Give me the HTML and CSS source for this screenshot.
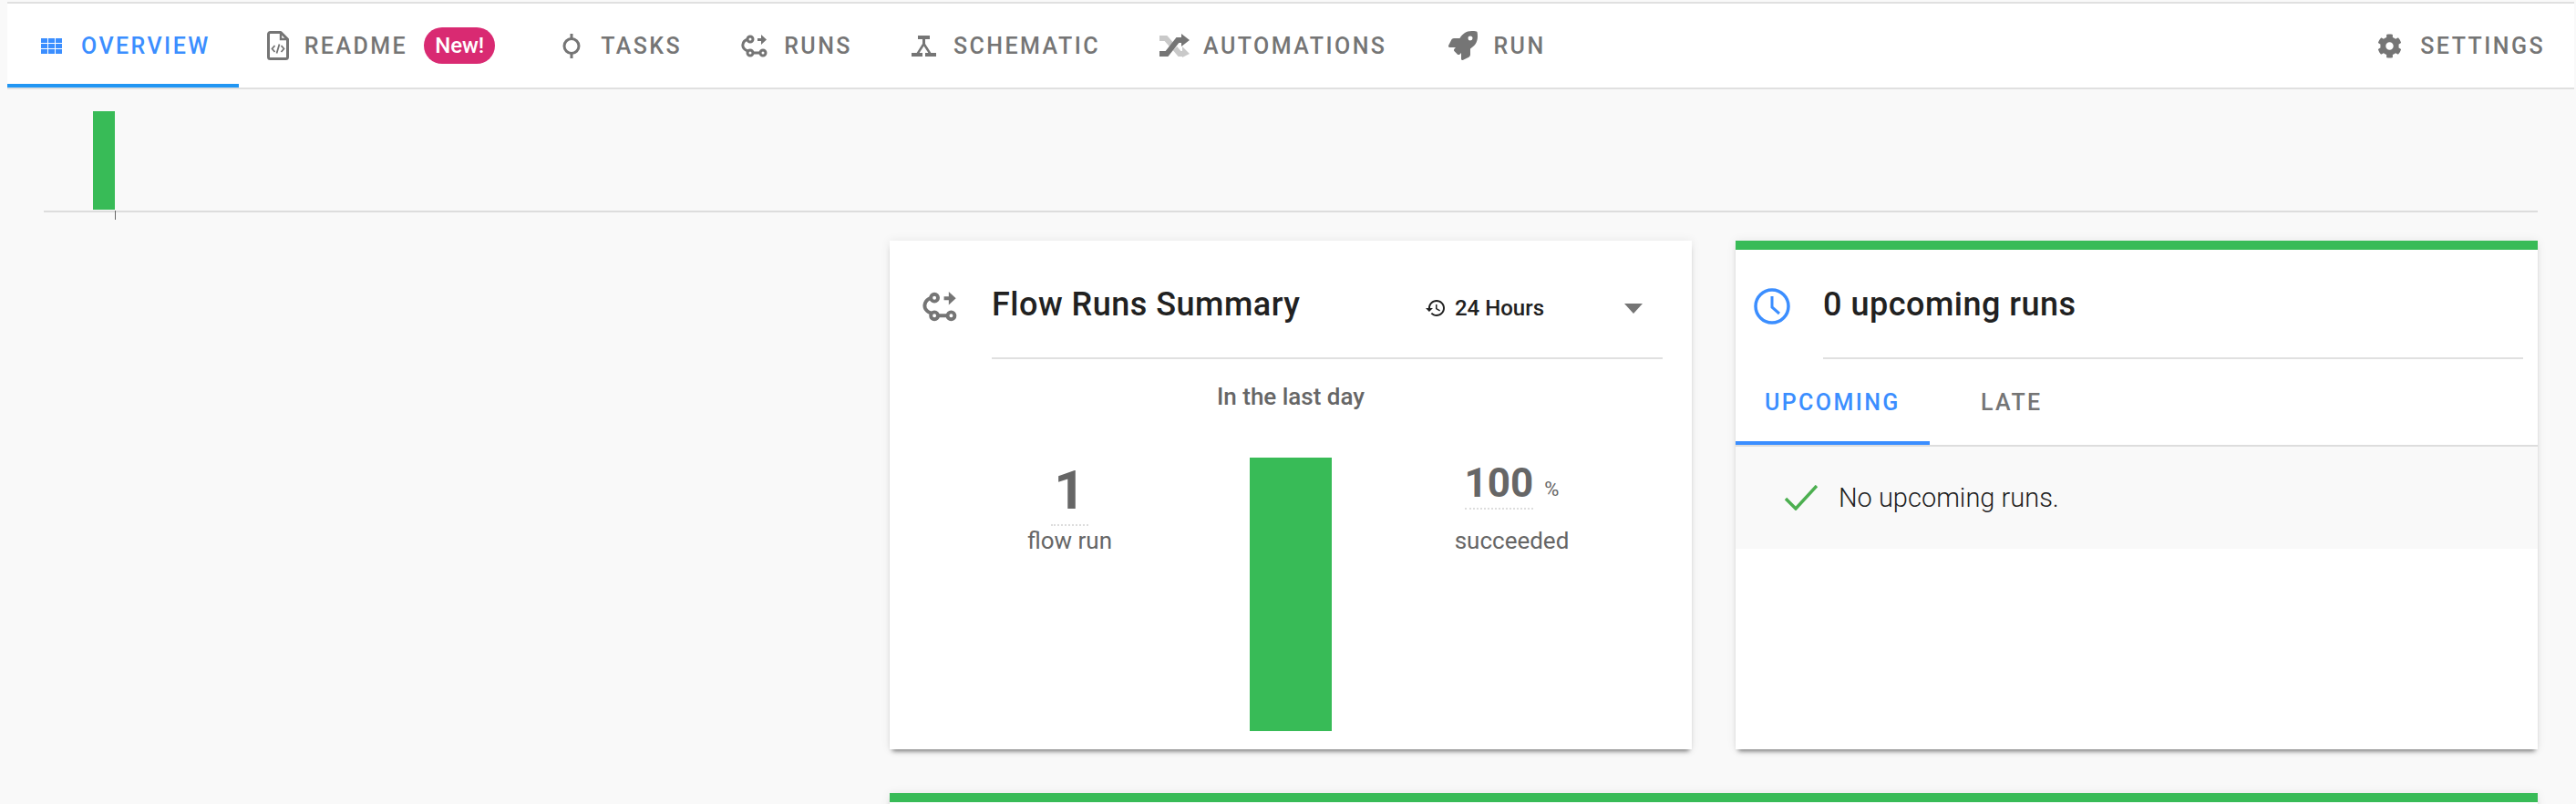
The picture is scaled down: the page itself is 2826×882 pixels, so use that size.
FILE: index.html
```html
<!DOCTYPE html>
<html lang="en">
<head>
    <meta charset="UTF-8">
    <title>Flow Overview</title>
    <link rel="stylesheet" href="styles.css">
</head>
<body>

<!-- Top tabs -->
<nav class="nav">
    <a class="tab active">
        <svg class="ic-overview" viewBox="0 0 23 17" fill="currentColor">
            <rect x="0" y="0" width="7" height="5"/><rect x="8" y="0" width="7" height="5"/><rect x="16" y="0" width="7" height="5"/>
            <rect x="0" y="6" width="7" height="5"/><rect x="8" y="6" width="7" height="5"/><rect x="16" y="6" width="7" height="5"/>
            <rect x="0" y="12" width="7" height="5"/><rect x="8" y="12" width="7" height="5"/><rect x="16" y="12" width="7" height="5"/>
        </svg>
        OVERVIEW
    </a>
    <a class="tab tab-readme">
        <svg class="ic-readme" viewBox="0 0 24 32" fill="none" stroke="currentColor">
            <path d="M15 1.5H3.5a2 2 0 0 0-2 2v25a2 2 0 0 0 2 2h17a2 2 0 0 0 2-2V9z" stroke-width="3" stroke-linejoin="round"/>
            <path d="M15 2v7h7" stroke-width="2.4"/>
            <path d="M8.5 16l-3 3.5 3 3.5M15.500 16l3 3.500-3 3.500M13.500 14.500l-3 10" stroke-width="1.800"/>
        </svg>
        README
        <span class="badge">New!</span>
    </a>
    <a class="tab">
        <svg class="ic-tasks" viewBox="0 0 38 27" fill="none" stroke="currentColor" stroke-width="3">
            <circle cx="19" cy="13.500" r="8"/>
            <path d="M19 0v5.500M19 21.500V27"/>
        </svg>
        TASKS
    </a>
    <a class="tab">
        <svg class="ic-runs" viewBox="0 0 29 25">
            <use href="#runs-glyph"/>
        </svg>
        RUNS
    </a>
    <a class="tab">
        <svg class="ic-schematic" viewBox="0 0 27 23" fill="currentColor">
            <rect x="7" y="0" width="13" height="4"/>
            <rect x="12" y="3" width="3" height="7"/>
            <path d="M12 9h3l7 11h-3l-5.500-8.500L8 20H5z"/>
            <rect x="0" y="19" width="12" height="4"/>
            <rect x="15" y="19" width="12" height="4"/>
        </svg>
        SCHEMATIC
    </a>
    <a class="tab">
        <svg class="ic-auto" viewBox="0 0 33 26" fill="none" stroke-width="6">
            <path d="M0 5h7l7 8M17 16l5 6h5" stroke="#c9c9c9"/>
            <path d="M25 14l8 8-8 4z" fill="#c9c9c9"/>
            <path d="M0 22h8L20 7h7" stroke="currentColor"/>
            <path d="M24 0l9 7-9 7z" fill="currentColor"/>
        </svg>
        AUTOMATIONS
    </a>
    <a class="tab">
        <svg class="ic-run" viewBox="0 0 512 512" fill="currentColor">
            <path d="M505.12 19.09c-1.19-5.53-6.66-11-12.21-12.19C460.72 0 435.51 0 410.41 0 307.18 0 245.27 55.2 199.05 128H94.84c-16.35.02-35.56 11.88-42.89 26.48L2.52 253.3A28.4 28.4 0 0 0 0 264a24 24 0 0 0 24 24h103.81l-22.47 22.47c-11.37 11.36-13 32.26 0 45.25l50.9 50.9c11.16 11.19 32.16 13.16 45.28 0l22.47-22.47V488a24 24 0 0 0 24 24 28.56 28.56 0 0 0 10.71-2.52l98.73-49.39c14.63-7.3 26.51-26.5 26.51-42.86V312.8c72.6-46.31 128.03-108.41 128.03-211.1.03-25.2.03-50.4-6.92-82.61zM384.04 168a40 40 0 1 1 40.01-40 40.02 40.02 0 0 1-40.01 40z"/>
        </svg>
        RUN
    </a>
    <a class="tab tab-settings">
        <svg class="ic-settings" viewBox="0 0 512 512" fill="currentColor">
            <path d="M487.4 315.700l-42.600-24.600c4.300-23.200 4.300-47 0-70.200l42.600-24.600c4.900-2.800 7.100-8.600 5.500-14-11.100-35.600-30-67.800-54.700-94.600-3.800-4.100-10-5.100-14.800-2.300L380.800 110c-17.900-15.400-38.500-27.300-60.800-35.100V25.800c0-5.600-3.900-10.500-9.400-11.700-36.700-8.200-74.300-7.800-109.200 0-5.500 1.200-9.400 6.100-9.400 11.700V75c-22.200 7.900-42.800 19.800-60.800 35.100L88.700 85.500c-4.900-2.800-11-1.900-14.800 2.300-24.700 26.700-43.600 58.900-54.700 94.600-1.700 5.400.6 11.200 5.500 14L67.300 221c-4.300 23.200-4.300 47 0 70.200l-42.600 24.600c-4.900 2.800-7.100 8.600-5.500 14 11.100 35.600 30 67.800 54.700 94.600 3.800 4.100 10 5.100 14.800 2.300l42.600-24.600c17.900 15.400 38.500 27.300 60.800 35.100v49.200c0 5.600 3.900 10.500 9.400 11.700 36.700 8.200 74.300 7.800 109.200 0 5.500-1.200 9.400-6.100 9.400-11.700v-49.200c22.200-7.900 42.800-19.800 60.800-35.100l42.600 24.600c4.900 2.800 11 1.900 14.800-2.300 24.700-26.700 43.600-58.900 54.700-94.600 1.500-5.500-.7-11.300-5.600-14.100zM256 336c-44.100 0-80-35.900-80-80s35.900-80 80-80 80 35.900 80 80-35.900 80-80 80z"/>
        </svg>
        SETTINGS
    </a>
</nav>

<!-- Shared glyph for the flow run icon -->
<svg class="defs" aria-hidden="true">
    <symbol id="runs-glyph" viewBox="0 0 29 25">
        <g fill="none" stroke="currentColor" stroke-width="3">
            <circle cx="10" cy="5" r="3"/>
            <circle cx="10" cy="20" r="3"/>
            <circle cx="24" cy="20" r="3"/>
            <path d="M13 20h8M7.500 5C1 7-1 15 7.500 18"/>
        </g>
        <path d="M18 4h4V0l6 5.500-6 5.500V7h-4z" fill="currentColor"/>
    </symbol>
</svg>

<!-- Run history bars -->
<section class="history">
    <div class="history-bar"></div>
</section>

<main class="grid">

    <!-- Flow runs summary -->
    <section class="card">
        <header class="card-head">
            <svg class="head-icon ic-flow" viewBox="0 0 29 25"><use href="#runs-glyph"/></svg>
            <div class="head-main">
                <h2>Flow Runs Summary</h2>
                <div class="range">
                    <svg viewBox="0 0 24 24" fill="currentColor"><path d="M13 3c-4.970 0-9 4.030-9 9H1l3.890 3.890.07.14L9 12H6c0-3.870 3.130-7 7-7s7 3.130 7 7-3.130 7-7 7c-1.930 0-3.680-.79-4.940-2.060l-1.420 1.420C8.270 19.990 10.510 21 13 21c4.970 0 9-4.030 9-9s-4.030-9-9-9zm-1 5v5l4.280 2.540.72-1.210-3.500-2.080V8H12z"/></svg>
                    <span>24 Hours</span>
                    <i class="caret"></i>
                </div>
            </div>
        </header>
        <p class="period">In the last day</p>
        <div class="stats">
            <div class="stat">
                <div class="stat-top">
                    <span class="stat-val stat-count">1</span>
                </div>
                <span class="stat-label">flow run</span>
            </div>
            <div class="stat-bar"></div>
            <div class="stat">
                <div class="stat-top">
                    <span class="stat-val stat-pct">100</span>
                    <span class="pct-sign">%</span>
                </div>
                <span class="stat-label">succeeded</span>
            </div>
        </div>
    </section>

    <!-- Upcoming runs -->
    <section class="card card-green">
        <header class="card-head">
            <svg class="head-icon ic-clock" viewBox="0 0 40 40" fill="none" stroke="currentColor" stroke-width="3.500">
                <circle cx="20" cy="20" r="18"/>
                <path d="M20 9v12l8 7" stroke-width="3"/>
            </svg>
            <div class="head-main head-upcoming">
                <h2>0 upcoming runs</h2>
            </div>
        </header>
        <div class="subtabs">
            <a class="subtab active">UPCOMING</a>
            <a class="subtab">LATE</a>
        </div>
        <div class="empty">
            <svg viewBox="0 0 36 28" fill="none" stroke="#4caf50" stroke-width="3.500"><path d="M1 15l11 11L35 1"/></svg>
            <span>No upcoming runs.</span>
        </div>
    </section>

    <!-- Next card, cut off by the window -->
    <section class="card card-green card-wide"></section>

</main>
</body>
</html>
```

FILE: styles.css
```css
html, body {
    height: 882px;
    overflow: hidden;
}
body {
    margin: 0;
    padding-top: 2px;
    background-color: #f9f9f9;
    font-family: Roboto, 'Liberation Sans', sans-serif;
    color: #212121;
}
.defs {
    display: none;
}
h2 {
    margin: 0;
    font-size: 36px;
    font-weight: 500;
    line-height: 44px;
    letter-spacing: 0.5px;
    color: #212121;
}

/* nav */
.nav {
    display: flex;
    height: 92px;
    margin: 0 2px 0 8px;
    background-color: #fff;
    border-top: 2px solid #e0e0e0;
    border-bottom: 2px solid #e0e0e0;
}
.tab {
    display: flex;
    align-items: center;
    height: 92px;
    box-sizing: border-box;
    padding: 0 33px 0 32px;
    font-size: 25px;
    font-weight: 500;
    letter-spacing: 2.450px;
    color: #757575;
}
.tab.active {
    padding: 0 31px 0 37px;
    color: #3b8eff;
    box-shadow: inset 0 -4px 0 #2196f3;
}
.tab-readme {
    padding-left: 31px;
}
.tab-settings {
    margin-left: auto;
    padding-right: 32px;
}
.ic-overview { width: 23px; height: 17px; margin-right: 21px; }
.ic-readme { width: 24px; height: 32px; margin-right: 17px; }
.ic-tasks { width: 38px; height: 27px; margin-right: 13px; }
.ic-runs { width: 29px; height: 25px; margin-right: 18px; }
.ic-schematic { width: 27px; height: 23px; margin-right: 19px; }
.ic-auto { width: 33px; height: 26px; margin-right: 15px; }
.ic-run { width: 32px; height: 32px; margin-right: 17px; margin-left: 3px; }
.ic-settings { width: 27px; height: 27px; margin-right: 20px; }
.badge {
    margin-left: 18px;
    padding: 0 12px;
    height: 40px;
    line-height: 40px;
    border-radius: 20px;
    background-color: #d92a72;
    color: #fff;
    font-size: 24px;
    letter-spacing: 0;
}

/* history chart */
.history {
    position: relative;
    margin: 0 42px 0 48px;
    padding-top: 24px;
    border-bottom: 2px solid #ddd;
}
.history::after {
    content: "";
    position: absolute;
    left: 78px;
    top: 100%;
    width: 1px;
    height: 10px;
    background-color: #666;
}
.history-bar {
    width: 24px;
    height: 108px;
    margin: 0 0 1px 54px;
    background-color: #38bb57;
}

/* cards */
.grid {
    display: grid;
    grid-template-columns: 880px 880px;
    gap: 48px;
    margin: 31px 42px 0 976px;
}
.card {
    height: 558px;
    box-sizing: border-box;
    background-color: #fff;
    box-shadow: 0 5px 5px -3px rgba(0,0,0,0.5), 0 0 10px rgba(0,0,0,0.08);
}
.card-green {
    border-top: 10px solid #38bb57;
}
.card-wide {
    grid-column: 1 / 3;
}
.card-head {
    display: flex;
    height: 130px;
}
.card-green .card-head {
    height: 120px;
}
.head-icon {
    flex: none;
}
.ic-flow {
    width: 38px;
    height: 33px;
    margin: 56px 38px 0 36px;
    color: #757575;
}
.ic-clock {
    width: 40px;
    height: 40px;
    margin: 42px 36px 0 20px;
    color: #3b8eff;
}
.head-main {
    flex: 1;
    display: flex;
    padding-top: 48px;
    margin-right: 32px;
    border-bottom: 2px solid #e0e0e0;
}
.head-upcoming {
    padding-top: 38px;
    margin-right: 16px;
}
.range {
    display: flex;
    align-items: center;
    align-self: flex-start;
    margin: 8px 22px 0 auto;
    height: 36px;
    font-size: 24px;
    font-weight: 500;
}
.range svg {
    width: 24px;
    height: 24px;
    margin-right: 9px;
}
.caret {
    margin-left: 88px;
    border-left: 10px solid transparent;
    border-right: 10px solid transparent;
    border-top: 11px solid #757575;
}

/* summary */
.period {
    margin: 0;
    height: 108px;
    padding-top: 26px;
    box-sizing: border-box;
    text-align: center;
    font-size: 26px;
    line-height: 30px;
    font-weight: 500;
    color: #666;
}
.stats {
    display: grid;
    grid-template-columns: 1fr 90px 1fr;
}
.stat {
    display: flex;
    flex-direction: column;
    align-items: center;
}
.stat-top {
    display: flex;
    align-items: flex-start;
    height: 76px;
}
.stat-val {
    font-weight: 700;
    color: #666;
    border-bottom: 2px dotted #ddd;
}
.stat-count {
    margin-top: 6px;
    padding: 0 3px 7px;
    font-size: 60px;
    line-height: 60px;
}
.stat-pct {
    margin-top: 6px;
    padding-bottom: 5px;
    font-size: 44px;
    line-height: 44px;
}
.pct-sign {
    margin: 22px 0 0 12px;
    font-size: 22px;
    line-height: 26px;
    color: #666;
}
.stat-label {
    font-size: 26px;
    line-height: 30px;
    color: #666;
}
.stat-bar {
    height: 300px;
    background-color: #38bb57;
}

/* upcoming */
.subtabs {
    display: flex;
    height: 96px;
    box-sizing: border-box;
    border-bottom: 2px solid #ddd;
}
.subtab {
    box-sizing: border-box;
    height: 94px;
    min-width: 180px;
    padding: 0 32px;
    text-align: center;
    font-size: 25px;
    line-height: 96px;
    font-weight: 500;
    letter-spacing: 2.400px;
    color: #757575;
}
.subtab.active {
    color: #3b8eff;
    border-bottom: 4px solid #3b8eff;
}
.empty {
    display: flex;
    align-items: center;
    height: 112px;
    padding-left: 54px;
    background-color: #f9f9f9;
    font-size: 29px;
    font-weight: 300;
    color: #212121;
}
.empty svg {
    width: 36px;
    height: 28px;
    margin-right: 23px;
}
```
